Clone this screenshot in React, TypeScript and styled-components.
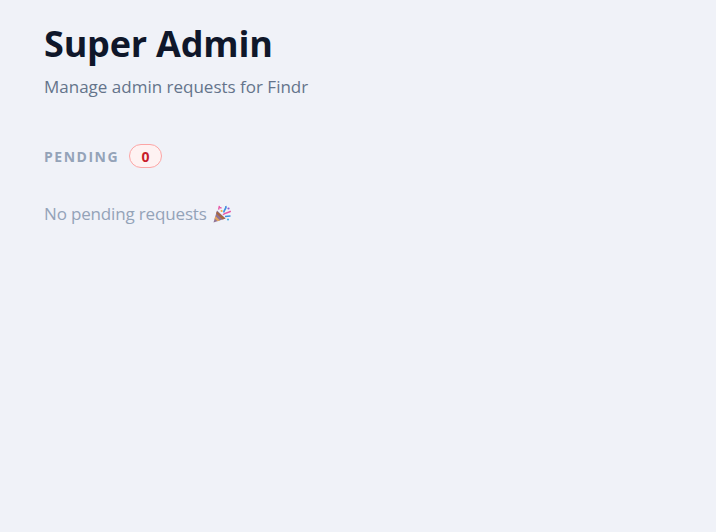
import React from 'react';
import styled, { createGlobalStyle } from 'styled-components';

const GlobalStyle = createGlobalStyle`
  html, body {
    margin: 0;
    padding: 0;
    background: #f0f2f8;
  }
  body {
    font-family: 'Open Sans', 'Noto Sans', sans-serif;
  }
`;

const Page = styled.main`
  min-height: 532px;
  box-sizing: border-box;
  padding: 20px 44px;
  background: #f0f2f8;
`;

const Title = styled.h1`
  margin: 0;
  font-size: 36px;
  line-height: 48px;
  font-weight: 700;
  letter-spacing: -0.2px;
  color: #0f172a;
`;

const Subtitle = styled.p`
  margin: 7px 0 0;
  font-size: 17px;
  line-height: 24px;
  color: #64748b;
`;

const SectionHeader = styled.div`
  display: flex;
  align-items: center;
  gap: 10px;
  margin-top: 45px;
`;

const SectionLabel = styled.span`
  font-size: 14px;
  font-weight: 700;
  letter-spacing: 1.5px;
  color: #94a3b8;
`;

const CountBadge = styled.span`
  display: flex;
  align-items: center;
  justify-content: center;
  box-sizing: border-box;
  min-width: 33px;
  height: 24px;
  border: 1px solid #fca5a5;
  border-radius: 12px;
  background: #fef2f2;
  font-size: 14px;
  font-weight: 700;
  color: #c81e2a;
`;

const EmptyMessage = styled.p`
  display: flex;
  align-items: center;
  gap: 6px;
  margin: 34px 0 0;
  font-size: 17px;
  line-height: 24px;
  letter-spacing: -0.16px;
  color: #94a3b8;
`;

// party popper, drawn because the installed emoji font has a different one
const PartyPopper = () => (
  <svg width="18" height="18" viewBox="0 0 18 18" role="img" aria-label="🎉">
    <path d="M0.5 17.5 L4 5.5 L12.5 13.5 Z" fill="#8f7396" />
    <path d="M2.4 11 L7 15.6 L4.6 16.3 L1.6 13.4 Z" fill="#e3a45e" />
    <path d="M3.8 6.5 L12.5 13.5 L9.6 14.6 L3.2 8.4 Z" fill="#a5683f" />
    <path d="M6.4 0.8 L5.6 4.6 M5.4 2 L8.6 3.2" stroke="#e85aa8" strokeWidth="1.4" fill="none" />
    <path d="M12.8 1 C14 3.5 10.8 4.5 10.8 7.5" stroke="#3f8fe0" strokeWidth="1.7" fill="none" />
    <path d="M10 9.8 C12.5 7.5 15 8.2 17.8 6.2" stroke="#e85aa8" strokeWidth="1.5" fill="none" />
    <path d="M12 11.5 L17.5 11" stroke="#3f8fe0" strokeWidth="1.5" fill="none" />
    <circle cx="8.6" cy="6" r="1.1" fill="#f0b23c" />
    <circle cx="15.5" cy="3.5" r="1.1" fill="#8a5ad6" />
    <circle cx="15" cy="14.5" r="1.1" fill="#4fb3e8" />
  </svg>
);

export default function App() {
  return (
    <>
      <GlobalStyle />
      <Page>
        <Title>Super Admin</Title>
        <Subtitle>Manage admin requests for Findr</Subtitle>
        <SectionHeader>
          <SectionLabel>PENDING</SectionLabel>
          <CountBadge>0</CountBadge>
        </SectionHeader>
        <EmptyMessage>
          No pending requests
          <PartyPopper />
        </EmptyMessage>
      </Page>
    </>
  );
}
